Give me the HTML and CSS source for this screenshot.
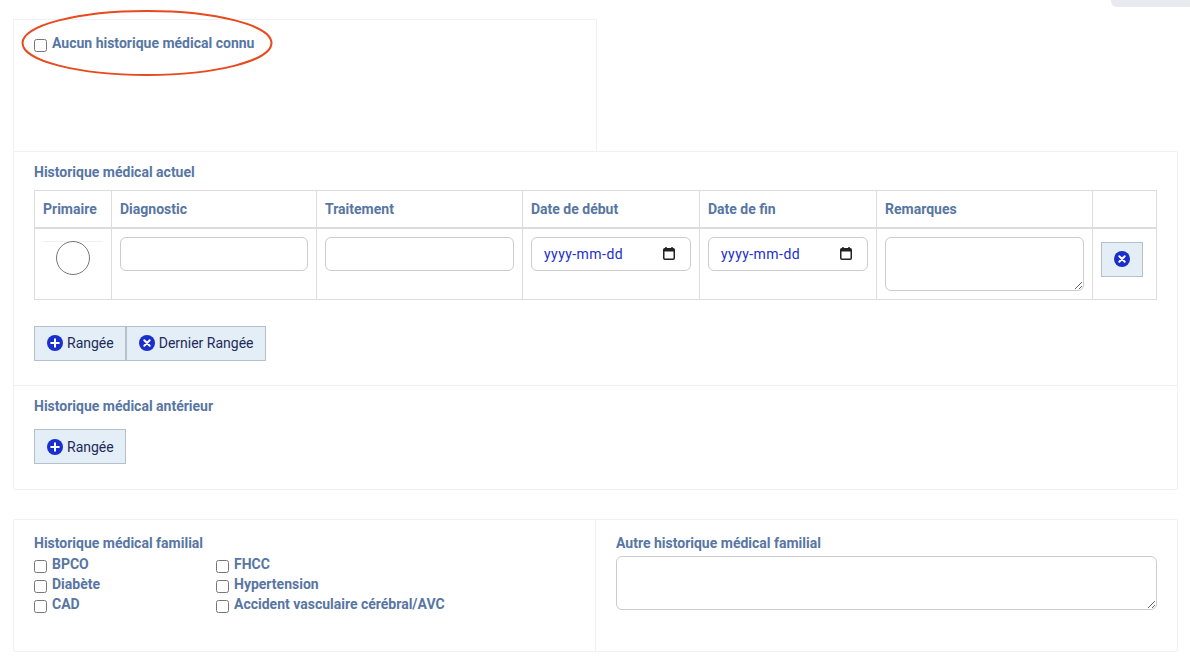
FILE: index.html
```html
<!DOCTYPE html>
<html lang="fr">
<head>
<meta charset="utf-8">
<title>Historique médical</title>
<link rel="stylesheet" href="styles.css">
</head>
<body>
<div class="top-tab"></div>
<svg class="ellipse" width="252" height="69" viewBox="0 0 252 69"><ellipse cx="126" cy="34" rx="124.500" ry="32" fill="none" stroke="#e8491d" stroke-width="2"/></svg>
<main class="page">
  <section class="card card-none">
    <label class="check"><input type="checkbox"><span>Aucun historique médical connu</span></label>
  </section>
  <section class="card card-history">
    <div class="block block-current">
      <h3 class="label">Historique médical actuel</h3>
      <table class="grid">
        <colgroup>
          <col class="c1"><col class="c2"><col class="c3"><col class="c4"><col class="c5"><col class="c6"><col class="c7">
        </colgroup>
        <thead>
          <tr><th>Primaire</th><th>Diagnostic</th><th>Traitement</th><th>Date de début</th><th>Date de fin</th><th>Remarques</th><th></th></tr>
        </thead>
        <tbody>
          <tr>
            <td><div class="radio-box"><input type="radio" class="radio"></div></td>
            <td><input type="text" class="field"></td>
            <td><input type="text" class="field"></td>
            <td><div class="field date"><span>yyyy-mm-dd</span><svg class="cal" viewBox="0 0 12 13"><path d="M3 0v2.500M9 0v2.500" stroke="#222" stroke-width="1.500"/><rect x=".75" y="1.750" width="10.500" height="10.500" rx="1.200" fill="none" stroke="#222" stroke-width="1.500"/><rect x=".75" y="1.750" width="10.500" height="2.750" fill="#222"/></svg></div></td>
            <td><div class="field date"><span>yyyy-mm-dd</span><svg class="cal" viewBox="0 0 12 13"><path d="M3 0v2.500M9 0v2.500" stroke="#222" stroke-width="1.500"/><rect x=".75" y="1.750" width="10.500" height="10.500" rx="1.200" fill="none" stroke="#222" stroke-width="1.500"/><rect x=".75" y="1.750" width="10.500" height="2.750" fill="#222"/></svg></div></td>
            <td><textarea class="area"></textarea></td>
            <td><button class="btn btn-icon" type="button"><svg class="ico" viewBox="0 0 16 16"><circle cx="8" cy="8" r="8" fill="#1a2ecb"/><path d="M5.300 5.300l5.400 5.400M10.700 5.300l-5.400 5.400" stroke="#fff" stroke-width="2" stroke-linecap="round"/></svg></button></td>
          </tr>
        </tbody>
      </table>
      <div class="actions">
        <button class="btn" type="button"><svg class="ico" viewBox="0 0 16 16"><circle cx="8" cy="8" r="8" fill="#1a2ecb"/><path d="M8 4.200v7.600M4.200 8h7.600" stroke="#fff" stroke-width="2" stroke-linecap="round"/></svg>Rangée</button><button class="btn" type="button"><svg class="ico" viewBox="0 0 16 16"><circle cx="8" cy="8" r="8" fill="#1a2ecb"/><path d="M5.300 5.300l5.400 5.400M10.700 5.300l-5.400 5.400" stroke="#fff" stroke-width="2" stroke-linecap="round"/></svg>Dernier Rangée</button>
      </div>
    </div>
    <div class="block block-past">
      <h3 class="label">Historique médical antérieur</h3>
      <div class="actions actions-past">
        <button class="btn" type="button"><svg class="ico" viewBox="0 0 16 16"><circle cx="8" cy="8" r="8" fill="#1a2ecb"/><path d="M8 4.200v7.600M4.200 8h7.600" stroke="#fff" stroke-width="2" stroke-linecap="round"/></svg>Rangée</button>
      </div>
    </div>
  </section>
  <section class="card card-family">
    <div class="fam-left">
      <h3 class="label">Historique médical familial</h3>
      <div class="fam-grid">
        <label class="check"><input type="checkbox"><span>BPCO</span></label>
        <label class="check"><input type="checkbox"><span>FHCC</span></label>
        <label class="check"><input type="checkbox"><span>Diabète</span></label>
        <label class="check"><input type="checkbox"><span>Hypertension</span></label>
        <label class="check"><input type="checkbox"><span>CAD</span></label>
        <label class="check"><input type="checkbox"><span>Accident vasculaire cérébral/AVC</span></label>
      </div>
    </div>
    <div class="fam-right">
      <h3 class="label">Autre historique médical familial</h3>
      <textarea class="area area-wide"></textarea>
    </div>
  </section>
</main>
</body>
</html>
```
FILE: styles.css
```css
* { box-sizing: border-box; }
html, body { margin: 0; padding: 0; }
body {
  position: relative;
  height: 658px;
  overflow: hidden;
  background: #fff;
  font-family: Roboto, "Liberation Sans", sans-serif;
  font-size: 14px;
  color: #5876a3;
}
.top-tab {
  position: absolute;
  top: 0;
  right: 0;
  width: 79px;
  height: 7px;
  background: #e9eaef;
  border-bottom-left-radius: 6px;
}
.ellipse {
  position: absolute;
  left: 21px;
  top: 9px;
  pointer-events: none;
}
.page { padding: 19px 12px 0 13px; }
.card {
  border: 1px solid #f0f1f6;
  background: #fff;
}
.card-none {
  width: 584px;
  height: 132px;
  padding: 13px 20px;
  border-bottom: 0;
}
.card-history { border-radius: 0 2px 2px 2px; }
.card-family {
  display: flex;
  height: 133px;
  margin-top: 29px;
  border-radius: 2px;
}
.label {
  margin: 0;
  font-size: 14px;
  font-weight: 700;
  line-height: 20px;
  color: #5876a3;
}
.check {
  display: flex;
  align-items: flex-start;
  height: 20px;
  line-height: 20px;
  font-weight: 700;
  color: #5876a3;
}
.check input {
  width: 13px;
  height: 13px;
  margin: 6px 5px 0 0;
  flex: none;
}
.block-current {
  height: 234px;
  padding: 10px 20px 0;
  border-bottom: 1px solid #eceef4;
}
.block-past {
  height: 103px;
  padding: 10px 20px 0;
}
.grid {
  width: 1122px;
  margin-top: 8px;
  border-collapse: collapse;
  table-layout: fixed;
}
.c1 { width: 77px; }
.c2 { width: 205px; }
.c3 { width: 206px; }
.c4 { width: 177px; }
.c5 { width: 177px; }
.c6 { width: 216px; }
.c7 { width: 64px; }
.grid th, .grid td { border: 1px solid #dcdcdf; }
.grid th {
  height: 37px;
  padding: 0 8px;
  border-bottom-width: 2px;
  text-align: left;
  font-weight: 700;
  line-height: 20px;
  color: #5876a3;
}
.grid td {
  height: 71px;
  padding: 8px;
  vertical-align: top;
}
.radio-box {
  width: 60px;
  height: 34px;
  margin-top: 4px;
  border-top: 1px solid #f1f1f1;
  display: flex;
  justify-content: center;
}
.radio {
  width: 34px;
  height: 34px;
  margin: -1px 0 0;
}
.field {
  display: block;
  width: 100%;
  height: 34px;
  padding: 0 12px;
  border: 1px solid #ccc;
  border-radius: 6px;
  background: #fff;
  font-family: Roboto, "Liberation Sans", sans-serif;
  font-size: 14px;
  color: #1a2ecb;
}
.date {
  display: flex;
  align-items: center;
  justify-content: space-between;
  padding: 0 15px 0 12px;
  letter-spacing: .45px;
}
.cal {
  width: 12px;
  height: 13px;
  flex: none;
}
.area {
  display: block;
  width: 100%;
  height: 54px;
  padding: 6px 12px;
  border: 1px solid #ccc;
  border-radius: 6px;
  background: #fff;
  font-family: Roboto, "Liberation Sans", sans-serif;
  font-size: 14px;
}
.btn {
  display: inline-flex;
  align-items: center;
  height: 35px;
  padding: 0 11px 0 12px;
  border: 1px solid #b5c0ca;
  background: #e3eef6;
  font-family: Roboto, "Liberation Sans", sans-serif;
  font-size: 14px;
  color: #1e2a5a;
}
.btn-icon {
  width: 42px;
  justify-content: center;
  padding: 0;
  margin-top: 5px;
}
.btn-icon .ico { margin: 0; }
.ico {
  width: 16px;
  height: 16px;
  margin-right: 4px;
  flex: none;
}
.actions { display: flex; margin-top: 26px; }
.actions-past { margin-top: 13px; }
.fam-left {
  width: 582px;
  padding: 13px 20px 0;
  border-right: 1px solid #f0f1f6;
}
.fam-right {
  flex: 1;
  padding: 13px 20px 0;
}
.fam-grid {
  display: grid;
  grid-template-columns: 182px 1fr;
  margin-top: 1px;
}
.area-wide { margin-top: 3px; }
```
